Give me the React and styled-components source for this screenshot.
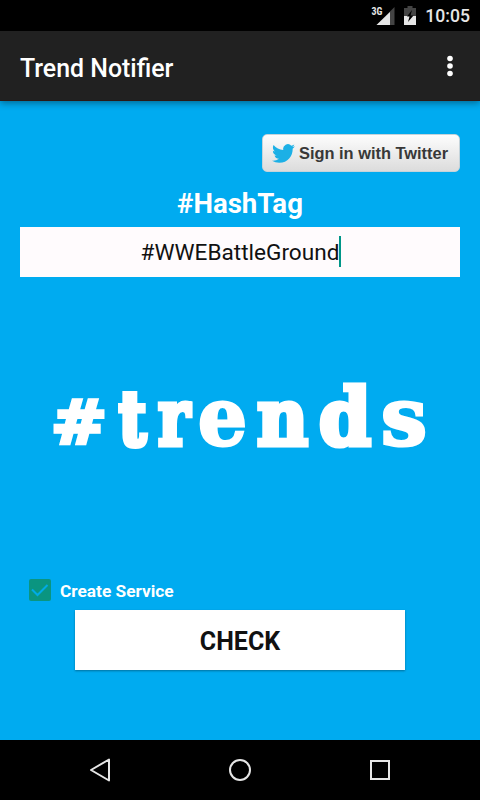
import React from "react";
import styled, { createGlobalStyle } from "styled-components";

const GlobalStyle = createGlobalStyle`
  body {
    margin: 0;
    background: #000;
  }

  * {
    box-sizing: border-box;
  }
`;

const Screen = styled.div`
  display: flex;
  flex-direction: column;
  width: 480px;
  height: 800px;
  overflow: hidden;
  background: #00abf0;
  font-family: Roboto, "Liberation Sans", sans-serif;

  svg {
    display: block;
    flex: none;
  }
`;

const StatusBar = styled.div`
  display: flex;
  justify-content: flex-end;
  gap: 9px;
  height: 31px;
  padding-right: 10px;
  background: #000;
  color: #e6e6e6;
`;

const Clock = styled.span`
  font-size: 17.600px;
  font-weight: 500;
  line-height: 33px;
`;

const Signal = styled.div`
  display: flex;
  align-items: flex-start;
`;

const NetworkType = styled.span`
  margin-right: -6px;
  padding-top: 5px;
  font-family: "Roboto Condensed", Roboto, sans-serif;
  font-size: 10px;
  font-weight: 700;
  line-height: 13px;
`;

const AppBar = styled.header`
  display: flex;
  align-items: center;
  justify-content: space-between;
  height: 70px;
  padding: 4px 25px 0 20px;
  background: #212121;
  border-bottom: 1px solid #2a1a17;
  box-shadow: 0 2px 7px rgba(0, 0, 0, 0.4);

  svg {
    margin-top: -3px;
  }
`;

const Title = styled.h1`
  margin: 2px 0 0;
  color: #fff;
  font-size: 24.900px;
  font-weight: 500;
  line-height: 30px;
`;

const Content = styled.main`
  display: flex;
  flex: 1;
  flex-direction: column;
  padding: 33px 20px 0;
`;

const TwitterButton = styled.button`
  display: flex;
  align-items: center;
  align-self: flex-end;
  width: 198px;
  height: 38px;
  padding: 0 0 0 9px;
  border: 1px solid #c4d3da;
  border-radius: 5px;
  background: linear-gradient(#fdfdfd, #dcdcdc);
  color: #383838;
  font-family: "Liberation Sans", Arial, sans-serif;
  font-size: 16.400px;
  font-weight: 700;
  white-space: nowrap;

  span {
    margin-left: 4px;
    padding-top: 1px;
  }
`;

const Heading = styled.h2`
  margin: 13px 0 0;
  color: #fff;
  font-size: 27.600px;
  font-weight: 700;
  line-height: 37px;
  text-align: center;
`;

const Field = styled.div`
  display: flex;
  align-items: center;
  justify-content: center;
  height: 50px;
  margin-top: 5px;
  padding: 1px 0 0 2px;
  background: #fffbfd;
  color: #111;
  font-size: 22.600px;
`;

const Caret = styled.i`
  width: 2px;
  height: 31px;
  margin-top: -2px;
  background: #009688;
`;

const Logo = styled.svg`
  margin-top: 73px;
  fill: #fff;
  stroke: #fff;
  font-weight: 700;
`;

const Glyph = styled.text`
  font-family: ${({ $sans }) => ($sans ? '"DejaVu Sans", sans-serif' : '"DejaVu Serif", serif')};
  font-size: ${({ $size }) => $size}px;
  stroke-width: ${({ $stroke }) => $stroke}px;
`;

const CheckRow = styled.label`
  display: flex;
  align-items: center;
  height: 24px;
  margin-top: 98px;
  padding-left: 8px;
  color: #fff;
  font-size: 17.300px;
  font-weight: 700;

  span {
    margin-left: 8px;
    padding-top: 2px;
  }
`;

const CheckButton = styled.button`
  align-self: center;
  width: 330px;
  height: 60px;
  margin-top: 8px;
  padding: 3px 0 0;
  border: 0;
  background: #fff;
  box-shadow: 0 1px 2px rgba(0, 0, 0, 0.35);
  color: #111;
  font-family: inherit;
  font-size: 25px;
  font-weight: 700;
`;

const NavBar = styled.nav`
  display: flex;
  align-items: center;
  justify-content: space-between;
  height: 60px;
  padding: 0 80px;
  background: #000;
`;

const letters = [
  { char: "#", x: 31, width: 56, size: 61, stroke: 3.6, sans: true },
  { char: "t", x: 99, width: 27, size: 74, stroke: 6 },
  { char: "r", x: 138, width: 32, size: 78, stroke: 5 },
  { char: "e", x: 178, width: 49, size: 80, stroke: 3 },
  { char: "n", x: 237, width: 51, size: 78, stroke: 5 },
  { char: "d", x: 299, width: 52, size: 78, stroke: 5 },
  { char: "s", x: 361, width: 46, size: 80, stroke: 3 },
];

const SignalIcon = () => (
  <svg width="19" height="31" viewBox="0 0 19 31">
    <path d="M18.500 7v18H.500z" fill="#444" />
    <path d="M14 12v13H.500z" fill="#e6e6e6" />
  </svg>
);

const BatteryIcon = () => (
  <svg width="12" height="31" viewBox="0 0 12 31">
    <path d="M0 8h3.500v-2h5v2H12v8H0z" fill="#444" />
    <path d="M0 16h12v9H0z" fill="#e6e6e6" />
    <path d="M8 10l-5 6.500h2.500L4 22l5.500-6.500H6.500z" fill="#000" />
  </svg>
);

const MenuIcon = () => (
  <svg width="10" height="24" viewBox="0 0 10 24" fill="#fff">
    <circle cx="5" cy="4.500" r="2.800" />
    <circle cx="5" cy="12" r="2.800" />
    <circle cx="5" cy="19.500" r="2.800" />
  </svg>
);

const BirdIcon = () => (
  <svg width="23" height="19" viewBox="0 0 24 19.500" fill="#1cb0e6">
    <path d="M23.950 2.310a10 10 0 0 1-2.820.770 4.960 4.960 0 0 0 2.160-2.720c-.950.560-2 .970-3.130 1.180a4.920 4.920 0 0 0-8.380 4.480C7.690 5.840 4.070 3.860 1.640.900a4.820 4.820 0 0 0-.670 2.480c0 1.710.870 3.210 2.190 4.100a4.900 4.900 0 0 1-2.230-.620v.060a4.920 4.920 0 0 0 3.950 4.830 5 5 0 0 1-2.210.080 4.940 4.940 0 0 0 4.600 3.420A9.870 9.870 0 0 1 0 17.290a13.990 13.990 0 0 0 7.560 2.210c9.050 0 14-7.500 14-13.980l-.020-.630a9.940 9.940 0 0 0 2.410-2.580z" />
  </svg>
);

const Tick = () => (
  <svg width="24" height="24" viewBox="0 0 24 24">
    <rect x="1" y="1" width="22" height="22" rx="2" fill="#0a9580" />
    <path d="M4 11.500l5.500 5.500L19.500 7" fill="none" stroke="#00abe6" strokeWidth="2" />
  </svg>
);

const NavIcon = ({ children }) => (
  <svg width="40" height="40" viewBox="0 0 40 40" fill="none" stroke="#e6e6e6" strokeWidth="2">
    {children}
  </svg>
);

export default function App() {
  return (
    <Screen>
      <GlobalStyle />
      <StatusBar>
        <Signal>
          <NetworkType>3G</NetworkType>
          <SignalIcon />
        </Signal>
        <BatteryIcon />
        <Clock>10:05</Clock>
      </StatusBar>
      <AppBar>
        <Title>Trend Notifier</Title>
        <MenuIcon />
      </AppBar>
      <Content>
        <TwitterButton>
          <BirdIcon />
          <span>Sign in with Twitter</span>
        </TwitterButton>
        <Heading>#HashTag</Heading>
        <Field>
          #WWEBattleGround
          <Caret />
        </Field>
        <Logo width="440" height="130" viewBox="0 0 440 130">
          {letters.map(({ char, x, width, size, stroke, sans }) => (
            <Glyph
              key={char}
              x={x}
              y={sans ? 93 : 94.5}
              textLength={width}
              lengthAdjust="spacingAndGlyphs"
              $size={size}
              $stroke={stroke}
              $sans={sans}
            >
              {char}
            </Glyph>
          ))}
        </Logo>
        <CheckRow>
          <Tick />
          <span>Create Service</span>
        </CheckRow>
        <CheckButton>CHECK</CheckButton>
      </Content>
      <NavBar>
        <NavIcon>
          <path d="M29 9.500v21L11 20z" strokeLinejoin="round" />
        </NavIcon>
        <NavIcon>
          <circle cx="20" cy="20" r="10" />
        </NavIcon>
        <NavIcon>
          <rect x="11" y="11" width="18" height="18" />
        </NavIcon>
      </NavBar>
    </Screen>
  );
}
